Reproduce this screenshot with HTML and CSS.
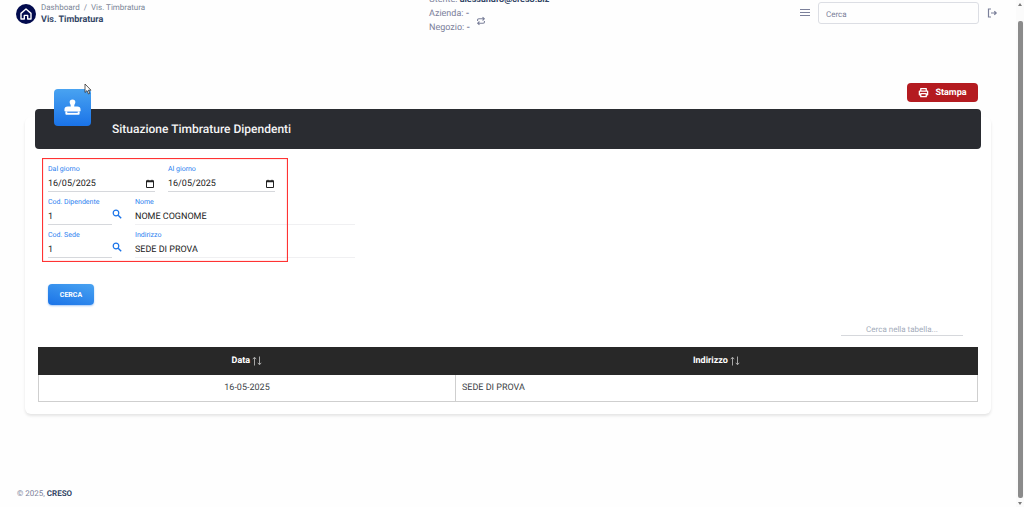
FILE: index.html
```html
<!DOCTYPE html>
<html lang="it">
<head>
    <meta charset="UTF-8">
    <meta name="viewport" content="width=device-width, initial-scale=1.0">
    <title>Vis. Timbratura</title>
    <link rel="stylesheet" href="styles.css">
</head>
<body>
    <header class="topbar">
        <div class="brand">
            <a href="#" class="home" aria-label="Home">
                <svg viewBox="0 0 20 20"><path d="M5 9.400 10 5l5 4.400V15h-3.300v-3.600H8.300V15H5z" fill="none" stroke="#fff" stroke-width="1.400" stroke-linejoin="round"/></svg>
            </a>
            <div>
                <nav class="breadcrumb"><a href="#">Dashboard</a><span>/</span><span>Vis. Timbratura</span></nav>
                <h1>Vis. Timbratura</h1>
            </div>
        </div>
        <div class="session">
            <div class="session-text">
                <div>Utente: <b class="user">alessandro@creso.biz</b></div>
                <div>Azienda: <b>-</b></div>
                <div>Negozio: <b>-</b></div>
            </div>
            <button class="icon-button swap" aria-label="Cambia azienda">
                <svg viewBox="0 0 16 16"><path d="M2.500 8V6.500a2 2 0 0 1 2-2H13M10.500 1.800 13.300 4.500l-2.800 2.700M13.500 8v1.500a2 2 0 0 1-2 2H3M5.500 8.800 2.700 11.500l2.800 2.700" fill="none" stroke="currentColor" stroke-width="1.700"/></svg>
            </button>
        </div>
        <div class="tools">
            <button class="icon-button" aria-label="Menu">
                <svg viewBox="0 0 12 12"><path d="M1 2.500h10M1 5.500h10M1 8.500h10" stroke="currentColor"/></svg>
            </button>
            <input type="text" class="search" placeholder="Cerca" aria-label="Cerca">
            <button class="icon-button" aria-label="Esci">
                <svg viewBox="0 0 12 12"><path d="M5 2H2.500v8H5M5 6h5M8.300 4.200 10.200 6 8.300 7.800" fill="none" stroke="currentColor" stroke-width="1.200"/></svg>
            </button>
        </div>
    </header>

    <main>
        <div class="actions">
            <button class="print">
                <svg viewBox="0 0 12 12"><path d="M3 4.500V1.700h6v2.800M3 8.500H1.500v-4h9v4H9M3 7.200h6v3.300H3z" fill="none" stroke="currentColor" stroke-width="1.400" stroke-linejoin="round"/></svg>
                Stampa
            </button>
        </div>

        <section class="card">
            <div class="card-header">
                <div class="tile">
                    <svg viewBox="0 0 20 20"><path d="M10 1.500a3 3 0 0 1 3 3c0 1.700-1.200 2-1.200 4.500H15a3.500 3.500 0 0 1 3.500 3.500V14h-17v-1.500A3.500 3.500 0 0 1 5 9h3.200C8.200 6.500 7 6.200 7 4.500a3 3 0 0 1 3-3z" fill="#fff"/><path d="M2.500 14v2.200c0 .8.500 1.300 1.300 1.300h12.400c.8 0 1.300-.5 1.300-1.300V14" fill="#fff"/><path d="M4.500 15h11" stroke="#2b7fec" stroke-width="1.200"/></svg>
                </div>
                <svg class="cursor" viewBox="0 0 8 12"><path d="M1 1v8.500l2-1.900 1.500 3.400 1.300-.6-1.400-3.200H7z" fill="#fff" stroke="#333" stroke-width=".8"/></svg>
                <h2>Situazione Timbrature Dipendenti</h2>
            </div>

            <form class="filters">
                <div class="row">
                    <div class="field date">
                        <label for="dal">Dal giorno</label>
                        <div class="control">
                            <input type="text" id="dal" value="16/05/2025">
                            <svg viewBox="0 0 10 10"><path d="M1.500 2h7v6.500h-7z" fill="none" stroke="#222"/><path d="M1 1.500h8v1.700H1zM2.500.7h1v1h-1zM6.500.7h1v1h-1z" fill="#222"/></svg>
                        </div>
                    </div>
                    <div class="field date">
                        <label for="al">Al giorno</label>
                        <div class="control">
                            <input type="text" id="al" value="16/05/2025">
                            <svg viewBox="0 0 10 10"><path d="M1.500 2h7v6.500h-7z" fill="none" stroke="#222"/><path d="M1 1.500h8v1.700H1zM2.500.7h1v1h-1zM6.500.7h1v1h-1z" fill="#222"/></svg>
                        </div>
                    </div>
                </div>
                <div class="row lookup">
                    <div class="field code">
                        <label for="dipendente">Cod. Dipendente</label>
                        <div class="control"><input type="text" id="dipendente" value="1"></div>
                    </div>
                    <button type="button" class="icon-button find" aria-label="Cerca dipendente">
                        <svg viewBox="0 0 10 10"><circle cx="4" cy="4" r="2.800" fill="none" stroke="currentColor" stroke-width="1.200"/><path d="m6.200 6.200 3 3" stroke="currentColor" stroke-width="1.400"/></svg>
                    </button>
                    <div class="field name">
                        <label for="nome">Nome</label>
                        <div class="control"><input type="text" id="nome" value="NOME COGNOME" readonly></div>
                    </div>
                </div>
                <div class="row lookup">
                    <div class="field code">
                        <label for="sede">Cod. Sede</label>
                        <div class="control"><input type="text" id="sede" value="1"></div>
                    </div>
                    <button type="button" class="icon-button find" aria-label="Cerca sede">
                        <svg viewBox="0 0 10 10"><circle cx="4" cy="4" r="2.800" fill="none" stroke="currentColor" stroke-width="1.200"/><path d="m6.200 6.200 3 3" stroke="currentColor" stroke-width="1.400"/></svg>
                    </button>
                    <div class="field name">
                        <label for="indirizzo">Indirizzo</label>
                        <div class="control"><input type="text" id="indirizzo" value="SEDE DI PROVA" readonly></div>
                    </div>
                </div>
                <div class="highlight"></div>
                <button type="button" class="submit">CERCA</button>
            </form>

            <div class="table-search">
                <input type="text" placeholder="Cerca nella tabella..." aria-label="Cerca nella tabella">
            </div>

            <table>
                <thead>
                    <tr>
                        <th class="col-date">Data <svg viewBox="0 0 10 10"><path d="M2.500 9.500v-8M.8 3.200l1.700-2 1.700 2M7.500.5v8M5.800 6.800l1.700 2 1.700-2" fill="none" stroke="currentColor" stroke-width=".9"/></svg></th>
                        <th>Indirizzo <svg viewBox="0 0 10 10"><path d="M2.500 9.500v-8M.8 3.200l1.700-2 1.700 2M7.500.5v8M5.800 6.800l1.700 2 1.700-2" fill="none" stroke="currentColor" stroke-width=".9"/></svg></th>
                    </tr>
                </thead>
                <tbody>
                    <tr>
                        <td class="center">16-05-2025</td>
                        <td>SEDE DI PROVA</td>
                    </tr>
                </tbody>
            </table>
        </section>
    </main>

    <footer>© 2025, <b>CRESO</b></footer>

    <div class="scrollbar">
        <span class="arrow up"></span>
        <span class="thumb"></span>
        <span class="arrow down"></span>
    </div>
</body>
</html>
```
FILE: styles.css
```css
* {
    box-sizing: border-box;
}
body {
    display: flex;
    flex-direction: column;
    min-height: 100vh;
    margin: 0;
    padding-right: 9px;
    background: #fefefe;
    color: #7b809a;
    font-family: Roboto, Arial, sans-serif;
    font-size: 8px;
    text-rendering: geometricPrecision;
}
h1, h2 {
    margin: 0;
}
a {
    color: inherit;
    text-decoration: none;
}
input, button {
    padding: 0;
    border: none;
    background: none;
    color: inherit;
    font-family: inherit;
    font-size: inherit;
    text-rendering: inherit;
}
input {
    min-width: 0;
    outline: none;
}
button {
    cursor: pointer;
}
svg {
    display: block;
}

/* top bar */
.topbar {
    display: grid;
    grid-template-columns: 413px 1fr auto;
    height: 40px;
    padding: 0 17px 0 16px;
    overflow: hidden;
}
.brand {
    display: flex;
    align-items: flex-start;
    gap: 5px;
    padding-top: 2px;
}
.home {
    width: 20px;
    height: 20px;
    margin-top: 2px;
    border-radius: 50%;
    background: #020b4e;
}
.breadcrumb {
    display: flex;
    gap: 4px;
    line-height: 12px;
    color: #7c8698;
}
.brand h1 {
    font-size: 9px;
    line-height: 12px;
    color: #344767;
}
.session {
    display: flex;
    align-items: flex-start;
    gap: 8px;
}
.session-text {
    width: 39px;
    margin-top: -7px;
    font-size: 9px;
    line-height: 14px;
    white-space: nowrap;
}
.session-text .user {
    color: #344767;
}
.icon-button svg {
    width: 12px;
    height: 12px;
}
.swap {
    margin-top: 16px;
}
.swap svg {
    width: 10px;
    height: 10px;
}
.tools {
    display: flex;
    align-items: flex-start;
    gap: 7px;
    padding-top: 2px;
}
.tools .icon-button {
    margin-top: 5px;
}
.search {
    width: 161px;
    height: 22px;
    padding: 2px 7px 0;
    border: 1px solid #dcdee4;
    border-radius: 3px;
}
::placeholder {
    color: inherit;
    opacity: 1;
}

main {
    padding: 43px 24px 0 25px;
}
.actions {
    display: flex;
    justify-content: flex-end;
    padding-right: 13px;
}
.print {
    display: flex;
    align-items: center;
    justify-content: center;
    gap: 6px;
    width: 71px;
    height: 19px;
    border-radius: 4px;
    background: #b41b20;
    color: #fff;
    font-size: 9px;
    font-weight: 700;
}
.print svg {
    width: 11px;
    height: 11px;
}

/* card */
.card {
    margin-top: 15px;
    padding: 0 13px 12px;
    border-radius: 6px;
    background: #fff;
    box-shadow: 0 2px 3px rgba(0, 0, 0, 0.1);
}
.card-header {
    position: relative;
    top: -8px;
    display: flex;
    align-items: center;
    height: 40px;
    margin: 0 -3px;
    padding-left: 77px;
    border-radius: 4px;
    background: #2a2c31;
}
.card-header h2 {
    color: #f4f4f5;
    font-size: 12px;
    font-weight: 500;
}
.tile {
    position: absolute;
    left: 19px;
    top: -20px;
    display: flex;
    align-items: center;
    justify-content: center;
    width: 37px;
    height: 37px;
    border-radius: 4px;
    background: linear-gradient(#49a3f1, #1a73e8);
}
.tile svg {
    width: 19px;
    height: 19px;
}
.cursor {
    position: absolute;
    left: 49px;
    top: -26px;
    width: 8px;
    height: 12px;
}

/* filters */
.filters {
    position: relative;
    padding: 7px 10px 0;
}
.row {
    display: flex;
    gap: 13px;
    height: 33px;
}
.lookup {
    gap: 0;
}
.field label {
    display: block;
    color: #2d7ff0;
    font-size: 7px;
    line-height: 11px;
}
.control {
    display: flex;
    align-items: center;
    height: 17px;
    padding-top: 1px;
    border-bottom: 1px solid #d6d8dc;
    color: #222;
    font-size: 9px;
}
.control input {
    flex: 1;
    width: 100%;
}
.control svg {
    width: 10px;
    height: 10px;
}
.date {
    width: 107px;
}
.code {
    width: 64px;
}
.find {
    align-self: flex-start;
    width: 10px;
    margin-top: 12px;
    color: #1a73e8;
}
.find svg {
    width: 10px;
    height: 10px;
}
.name {
    width: 220px;
    margin-left: 13px;
}
.name .control {
    border-bottom-color: #f0f0f2;
}
.highlight {
    position: absolute;
    left: 4px;
    top: 1px;
    width: 246px;
    height: 104px;
    border: 1px solid #f33;
    box-shadow: inset 0 0 1px #f33;
    pointer-events: none;
}
.submit {
    width: 46px;
    height: 21px;
    margin-top: 21px;
    border-radius: 4px;
    background: linear-gradient(15deg, #1a73e8, #49a3f1);
    box-shadow: 0 1px 2px rgba(26, 115, 232, 0.4);
    color: #fff;
    font-size: 7px;
    font-weight: 700;
}

/* table */
.table-search {
    display: flex;
    justify-content: flex-end;
    margin: 18px 15px 11px 0;
}
.table-search input {
    width: 122px;
    height: 13px;
    border-bottom: 1px solid #d6d8dc;
    color: #a5adbb;
    text-align: center;
}
table {
    width: 100%;
    border-collapse: collapse;
    table-layout: fixed;
    color: #3c3f46;
    font-size: 9px;
}
th, td {
    height: 27px;
    padding: 0 6px;
    border: 1px solid #cfcfcf;
}
th {
    border-color: #282828;
    background: #282828;
    color: #fff;
    font-weight: 700;
}
th svg {
    display: inline-block;
    width: 10px;
    height: 10px;
    color: #b5b5b5;
    vertical-align: -3px;
}
.col-date {
    width: 417px;
}
.center {
    text-align: center;
}

footer {
    margin-top: auto;
    padding: 0 17px 8px;
    line-height: 10px;
}
footer b {
    color: #344767;
}

/* scrollbar */
.scrollbar {
    position: fixed;
    top: 0;
    right: 0;
    bottom: 0;
    display: flex;
    flex-direction: column;
    align-items: center;
    gap: 15px;
    width: 8px;
    padding: 3px 0 2px;
    background: #fbfbfb;
}
.thumb {
    flex: 1;
    width: 5px;
    border-radius: 2px;
    background: #8b8b8b;
}
.arrow {
    border: 2px solid transparent;
}
.up {
    border-top: none;
    border-bottom: 3px solid #7a7a7a;
}
.down {
    margin-top: -11px;
    border-bottom: none;
    border-top: 3px solid #7a7a7a;
}
```
